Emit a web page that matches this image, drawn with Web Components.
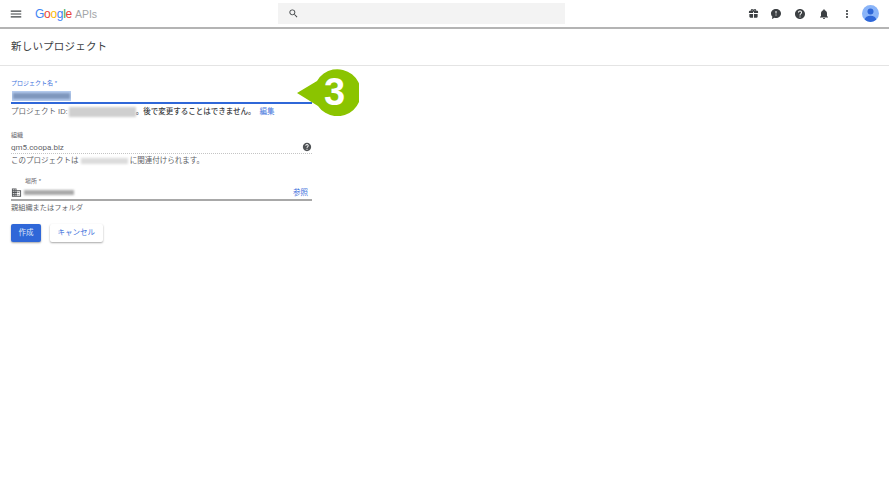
<!DOCTYPE html>
<html lang="ja">
<head>
<meta charset="utf-8">
<title>新しいプロジェクト</title>
<style>
  html, body { margin: 0; height: 100%; background: #fff; }
  body { font-family: "Liberation Sans", "Noto Sans CJK JP", sans-serif; color: #5f6368; overflow: hidden; position: relative; }
</style>
</head>
<body>
<api-header></api-header>
<page-title>新しいプロジェクト</page-title>
<project-form></project-form>
<step-callout number="3"></step-callout>

<script>
const ICONS = {
    gift: 'M20 6h-2.18c.11-.31.18-.65.18-1 0-1.66-1.34-3-3-3-1.05 0-1.96.54-2.5 1.35l-.5.67-.5-.68C10.96 2.54 10.05 2 9 2 7.34 2 6 3.34 6 5c0 .35.07.69.18 1H4c-1.11 0-2 .89-2 2v3h9V8h2v3h9V8c0-1.11-.89-2-2-2zM9 6c-.55 0-1-.45-1-1s.45-1 1-1 1 .45 1 1-.45 1-1 1zm6 0c-.55 0-1-.45-1-1s.45-1 1-1 1 .45 1 1-.45 1-1 1zM3 13v6c0 1.11.89 2 2 2h6v-8H3zm10 8h6c1.11 0 2-.89 2-2v-6h-8v8z',
    feedback: 'M12 2C6.48 2 2 6 2 11c0 2.4 1 4.5 2.7 6.1L4 22l5-2.5c1 .3 2 .5 3 .5 5.52 0 10-4 10-9s-4.48-9-10-9zm1 13h-2v-2h2v2zm0-4h-2V6h2v5z',
    help: 'M12 2C6.48 2 2 6.48 2 12s4.48 10 10 10 10-4.48 10-10S17.52 2 12 2zm1 17h-2v-2h2v2zm2.07-7.75l-.9.92C13.45 12.9 13 13.5 13 15h-2v-.5c0-1.1.45-2.1 1.17-2.83l1.24-1.26c.37-.36.59-.86.59-1.41 0-1.1-.9-2-2-2s-2 .9-2 2H8c0-2.21 1.79-4 4-4s4 1.79 4 4c0 .88-.36 1.68-.93 2.25z',
    bell: 'M12 22c1.1 0 2-.9 2-2h-4c0 1.1.9 2 2 2zm6-6v-5c0-3.07-1.63-5.64-4.5-6.32V4c0-.83-.67-1.5-1.5-1.5s-1.5.67-1.5 1.5v.68C7.64 5.36 6 7.92 6 11v5l-2 2v1h16v-1l-2-2z',
    more: 'M12 8c1.1 0 2-.9 2-2s-.9-2-2-2-2 .9-2 2 .9 2 2 2zm0 2c-1.1 0-2 .9-2 2s.9 2 2 2 2-.9 2-2-.9-2-2-2zm0 6c-1.1 0-2 .9-2 2s.9 2 2 2 2-.9 2-2-.9-2-2-2z',
    menu: 'M3 18h18v-2H3v2zm0-5h18v-2H3v2zm0-7v2h18V6H3z',
    search: 'M15.5 14h-.79l-.28-.27C15.41 12.59 16 11.11 16 9.5 16 5.91 13.09 3 9.5 3S3 5.91 3 9.5 5.91 16 9.5 16c1.61 0 3.09-.59 4.23-1.57l.27.28v.79l5 4.99L20.49 19l-4.99-5zm-6 0C7.01 14 5 11.99 5 9.5S7.01 5 9.5 5 14 7.01 14 9.5 11.99 14 9.5 14z',
    domain: 'M12 7V3H2v18h20V7H12zM6 19H4v-2h2v2zm0-4H4v-2h2v2zm0-4H4V9h2v2zm0-4H4V5h2v2zm4 12H8v-2h2v2zm0-4H8v-2h2v2zm0-4H8V9h2v2zm0-4H8V5h2v2zm10 12h-8v-2h2v-2h-2v-2h2v-2h-2V9h8v10zm-2-8h-2v2h2v-2zm0 4h-2v2h2v-2z'
};

class MatIcon extends HTMLElement {
    connectedCallback() {
        const size = this.getAttribute('size') || 12;
        const color = this.getAttribute('color') || '#3c4043';
        this.attachShadow({ mode: 'open' }).innerHTML = `
            <style>:host { display: block; width: ${size}px; height: ${size}px; line-height: 0; }</style>
            <svg width="${size}" height="${size}" viewBox="0 0 24 24" fill="${color}"><path d="${ICONS[this.getAttribute('name')]}"/></svg>
        `;
    }
}
customElements.define('mat-icon', MatIcon);

class ApiHeader extends HTMLElement {
    connectedCallback() {
        this.attachShadow({ mode: 'open' }).innerHTML = `
            <style>
                :host { display: flex; align-items: center; height: 27px; background: #fff; border-bottom: 2px solid #b4b4b4; box-sizing: content-box; }
                .burger { margin-left: 9px; }
                .logo { margin-left: 12px; width: 243px; font-size: 12px; letter-spacing: -.3px; white-space: nowrap; }
                .b { color: #4285f4; } .r { color: #ea4335; } .y { color: #fbbc05; } .g { color: #34a853; }
                .apis { color: #a3a5a8; margin-left: 3px; letter-spacing: 0; font-size: 10.5px; }
                .search { width: 287px; height: 21px; background: #f3f3f3; display: flex; align-items: center; padding-left: 10px; box-sizing: border-box; margin-bottom: 1px; }
                .actions { margin-left: auto; display: flex; align-items: center; }
                .actions mat-icon { margin-right: 11.7px; }
                .avatar { width: 17px; height: 17px; border-radius: 50%; background: #8ab4f8; margin: 0 10px 0 -3px; overflow: hidden; flex: none; }
            </style>
            <mat-icon class="burger" name="menu" size="14" color="#3c4043"></mat-icon>
            <div class="logo"><span class="b">G</span><span class="r">o</span><span class="y">o</span><span class="b">g</span><span class="g">l</span><span class="r">e</span><span class="apis">APIs</span></div>
            <div class="search"><mat-icon name="search" size="11" color="#3c4043"></mat-icon></div>
            <div class="actions">
                <mat-icon name="gift" size="11"></mat-icon>
                <mat-icon name="feedback" size="12"></mat-icon>
                <mat-icon name="help" size="12"></mat-icon>
                <mat-icon name="bell" size="12"></mat-icon>
                <mat-icon name="more" size="12"></mat-icon>
                <div class="avatar">
                    <svg width="17" height="17" viewBox="0 0 17 17"><circle cx="8.5" cy="6.6" r="3" fill="#2f67d8"/><ellipse cx="8.5" cy="14.4" rx="5.6" ry="3.6" fill="#2f67d8"/></svg>
                </div>
            </div>
        `;
    }
}
customElements.define('api-header', ApiHeader);

class PageTitle extends HTMLElement {
    connectedCallback() {
        this.attachShadow({ mode: 'open' }).innerHTML = `
            <style>
                :host { display: flex; align-items: center; height: 32px; padding: 0 0 4px 11px; border-bottom: 1px solid #e4e4e4; font-size: 10.5px; color: #3c4043; letter-spacing: .2px; }
            </style>
            <slot></slot>
        `;
    }
}
customElements.define('page-title', PageTitle);

// blurred-out values in the screenshot
class BlurBar extends HTMLElement {
    connectedCallback() {
        const w = this.getAttribute('w');
        const h = this.getAttribute('h') || 7;
        const c = this.getAttribute('color') || '#bdbdbd';
        this.attachShadow({ mode: 'open' }).innerHTML = `
            <style>
                :host { display: inline-block; width: ${w}px; height: ${h}px; vertical-align: middle; }
                div { width: 100%; height: 100%; background: ${c}; filter: blur(1px); }
            </style>
            <div></div>
        `;
    }
}
customElements.define('blur-bar', BlurBar);

class FormButton extends HTMLElement {
    connectedCallback() {
        this.attachShadow({ mode: 'open' }).innerHTML = `
            <style>
                :host { display: flex; align-items: center; justify-content: center; height: 18px; padding: 0 7.5px; font-size: 7.5px; border-radius: 2px; background: #fff; color: #3f73dc; box-shadow: 0 1px 2px rgba(0,0,0,.35); }
                :host([primary]) { background: #2f67d8; color: #dfe8fa; }
            </style>
            <slot></slot>
        `;
    }
}
customElements.define('form-button', FormButton);

class ProjectForm extends HTMLElement {
    connectedCallback() {
        this.attachShadow({ mode: 'open' }).innerHTML = `
            <style>
                :host { display: block; width: 301px; padding: 14px 0 0 11px; font-size: 7.5px; color: #5f6368; line-height: 10px; }
                .label { font-size: 6px; line-height: 7px; }
                .label.blue { color: #3f73dc; }
                .name { height: 10px; margin-top: 4px; padding: 0 0 1px 1px; border-bottom: 2px solid #2f67d8; }
                .name .sel { display: block; width: 59px; height: 10px; background: #b6cdf0; position: relative; overflow: hidden; }
                .name blur-bar { position: absolute; left: 1px; top: 2px; }
                .hint { margin-top: 3px; display: flex; align-items: center; white-space: nowrap; }
                .hint blur-bar { margin-left: 1px; }
                .hint b { font-weight: 500; color: #3c4043; }
                a { color: #3f73dc; text-decoration: none; }
                .hint a { margin-left: 4px; }
                .org { margin-top: 15px; }
                .org-value { display: flex; justify-content: space-between; align-items: center; height: 12px; margin-top: 2px; border-bottom: 1px dotted #c4c4c4; font: 8px Roboto, sans-serif; }
                .org-hint { margin-top: 2px; }
                .loc { margin-top: 12px; }
                .loc .label { padding-left: 14px; }
                .loc-value { display: flex; align-items: center; height: 13px; margin-top: 1px; border-bottom: 2px solid #a8a8a8; }
                .loc-value blur-bar { margin-left: 2px; }
                .loc-value a { margin-left: auto; margin-right: 4px; }
                .loc-hint { margin-top: 2px; font-size: 7.2px; }
                .buttons { display: flex; gap: 9px; margin-top: 11px; }
            </style>
            <div class="label blue">プロジェクト名 *</div>
            <div class="name"><span class="sel"><blur-bar w="57" h="6" color="#7f97bd"></blur-bar></span></div>
            <div class="hint">プロジェクト ID:<blur-bar w="67" h="10" color="#cfcfcf"></blur-bar><b>。後で変更することはできません。</b><a href="#">編集</a></div>
            <div class="org label">組織</div>
            <div class="org-value"><span>qm5.coopa.biz</span><mat-icon name="help" size="10" color="#505356"></mat-icon></div>
            <div class="org-hint">このプロジェクトは <blur-bar w="47" h="6" color="#dcdcdc"></blur-bar> に関連付けられます。</div>
            <div class="loc">
                <div class="label">場所 *</div>
                <div class="loc-value"><mat-icon name="domain" size="11" color="#505356"></mat-icon><blur-bar w="50" h="5" color="#a9a9a9"></blur-bar><a href="#">参照</a></div>
            </div>
            <div class="loc-hint">親組織またはフォルダ</div>
            <div class="buttons">
                <form-button primary>作成</form-button>
                <form-button>キャンセル</form-button>
            </div>
        `;
    }
}
customElements.define('project-form', ProjectForm);

// green numbered marker that sits over the form
class StepCallout extends HTMLElement {
    connectedCallback() {
        this.attachShadow({ mode: 'open' }).innerHTML = `
            <style>
                :host { position: absolute; left: 296px; top: 69px; width: 63px; height: 47px; }
                svg { position: absolute; inset: 0; }
                span { position: absolute; left: 20px; top: 0; width: 37px; height: 47px; display: flex; align-items: center; justify-content: center; color: #fff; font: bold 38px "Liberation Sans", sans-serif; }
            </style>
            <svg width="63" height="47" viewBox="0 0 63 47"><path d="M1 24 L21 12 A23.500 23.500 0 1 1 22 37 Z" fill="#8bc400"/></svg>
            <span>${this.getAttribute('number')}</span>
        `;
    }
}
customElements.define('step-callout', StepCallout);
</script>
</body>
</html>
